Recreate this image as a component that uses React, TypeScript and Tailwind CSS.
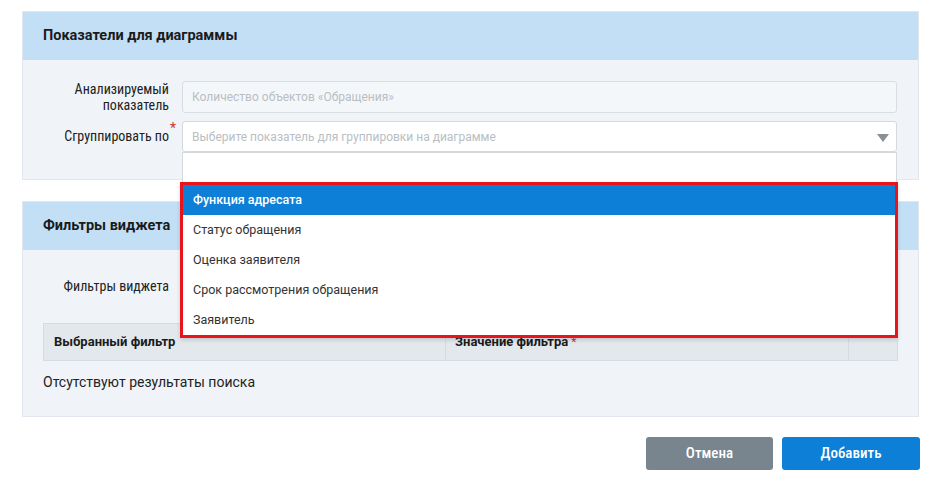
const options = [
  "Функция адресата",
  "Статус обращения",
  "Оценка заявителя",
  "Срок рассмотрения обращения",
  "Заявитель",
];

const cond = "font-['Roboto_Condensed','Liberation_Sans_Narrow','DejaVu_Sans_Condensed',Roboto,sans-serif]";

export default function App() {
  return (
    <div className="w-[938px] h-[497px] bg-white font-['Roboto',sans-serif] text-[#222] pt-[11px] pl-[22px] pr-[19px]">
      {/* Показатели */}
      <section className="relative border border-[#e1e7ec] bg-[#f0f4f8]">
        <div className="h-[48px] bg-[#c2dff5] flex items-center pl-[20px] text-[14.5px] font-bold text-[#1b1b1b]">
          Показатели для диаграммы
        </div>
        <div className="pl-[20px] pr-[21px] pt-[21px] pb-[27px] flex flex-col gap-[8px]">
          <div className="flex items-center">
            <div className={`w-[126px] text-right text-[14px] leading-[16px] text-[#222] ${cond}`}>
              Анализируемый
              <br />
              показатель
            </div>
            <div className="w-[13px]" />
            <div className="flex-1 h-[32px] rounded-[3px] border border-[#d9dee3] bg-[#f4f7fa] flex items-center pl-[9px] text-[12px] text-[#b9bec3]">
              Количество объектов «Обращения»
            </div>
          </div>
          <div className="flex items-center">
            <div className={`w-[126px] text-right text-[14px] text-[#222] ${cond}`}>Сгруппировать по</div>
            <div className="w-[13px] self-start pl-[1px] text-[#d0342c] text-[14px] leading-[14px]">*</div>
            <div className="relative flex-1 h-[31px] rounded-[3px] border border-[#d4d9de] bg-white flex items-center pl-[9px] text-[12px] text-[#b9bec3]">
              Выберите показатель для группировки на диаграмме
              <svg className="absolute right-[7px] top-[12px]" width="12" height="8" viewBox="0 0 12 8">
                <path d="M0 0 H12 L6 8 Z" fill="#8a8f94" />
              </svg>

              {/* Выпадающий список */}
              <div className="absolute left-[-1px] right-[-1px] top-[30px] z-10">
                <div className="h-[32px] bg-white border border-[#d4d9de] border-b-0" />
                <div className="ml-[-2px] mr-[-1px] mt-[-2px] border-[3px] border-[#e8141c] bg-white shadow-[0_2px_4px_rgba(0,0,0,0.15)]">
                  {options.map((o, i) => (
                    <div
                      key={o}
                      className={`h-[30px] flex items-center pl-[10px] text-[12.5px] ${
                        i === 0 ? "bg-[#0d7fd6] text-white font-medium h-[29px]" : "text-[#333]"
                      }`}
                    >
                      {o}
                    </div>
                  ))}
                </div>
              </div>
            </div>
          </div>
        </div>
      </section>

      {/* Фильтры */}
      <section className="mt-[21px] border border-[#e1e7ec] bg-[#f0f4f8]">
        <div className="h-[48px] bg-[#c2dff5] flex items-center pl-[20px] text-[14.5px] font-bold text-[#1b1b1b]">
          Фильтры виджета
        </div>
        <div className="pl-[20px] pr-[20px] pt-[20px] pb-[23px]">
          <div className="flex items-center h-[32px]">
            <div className={`w-[126px] text-right text-[14px] text-[#222] ${cond}`}>Фильтры виджета</div>
          </div>
          <div className="mt-[21px] flex h-[38px] border border-[#d5dbe0] bg-[#e3e8ed] text-[13px] font-bold text-[#1b1b1b]">
            <div className="w-[402px] border-r border-[#d5dbe0] flex items-center pl-[10px]">Выбранный фильтр</div>
            <div className="w-[403px] border-r border-[#d5dbe0] flex items-center pl-[9px]">
              Значение фильтра<span className="text-[#d0342c] font-normal ml-[3px] self-start mt-[9px] text-[12px]">*</span>
            </div>
            <div className="flex-1" />
          </div>
          <div className="mt-[11px] text-[14px] text-[#222]">Отсутствуют результаты поиска</div>
        </div>
      </section>

      <div className="mt-[20px] flex justify-end gap-[9px] mr-[-1px]">
        <button className={`w-[127px] h-[33px] rounded-[3px] bg-[#78848e] text-white text-[15px] font-medium ${cond}`}>
          Отмена
        </button>
        <button className={`w-[138px] h-[33px] rounded-[3px] bg-[#0d7fd6] text-white text-[15px] font-medium ${cond}`}>
          Добавить
        </button>
      </div>
    </div>
  );
}
